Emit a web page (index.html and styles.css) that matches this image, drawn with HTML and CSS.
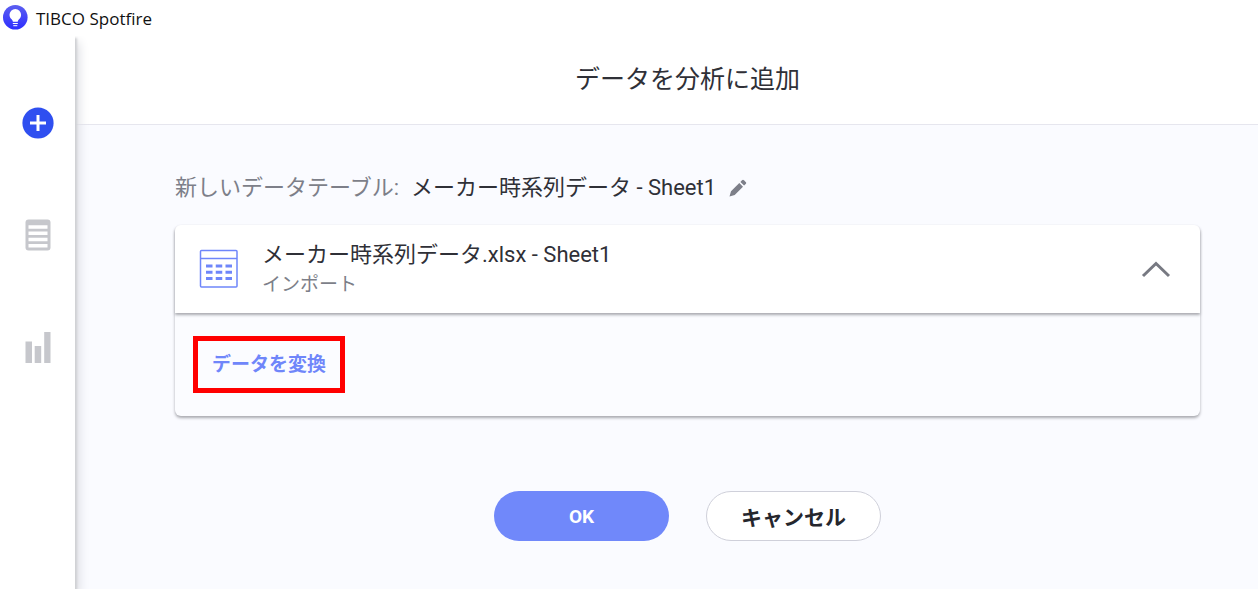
FILE: index.html
```html
<!DOCTYPE html>
<html lang="ja">
<head>
<meta charset="utf-8">
<meta name="viewport" content="width=device-width, initial-scale=1">
<title>TIBCO Spotfire</title>
<link rel="stylesheet" href="styles.css">
</head>
<body>
<header class="titlebar">
  <svg class="logo" width="26" height="26" viewBox="0 0 26 26" aria-hidden="true">
    <defs>
      <linearGradient id="logo-fill" x1="0" y1="0" x2="0" y2="1">
        <stop offset="0" stop-color="#5c5ff0"/>
        <stop offset="1" stop-color="#2d2dff"/>
      </linearGradient>
    </defs>
    <circle cx="13.300" cy="12.300" r="12.300" fill="url(#logo-fill)"/>
    <path d="M13.300 4a5.800 5.800 0 0 0-5.800 5.800c0 2.200 1 3.400 2.100 4.500.8.900 1.200 1.500 1.300 2.400h4.800c.1-.9.500-1.500 1.300-2.400 1.100-1.100 2.100-2.300 2.100-4.500A5.800 5.800 0 0 0 13.300 4z" fill="#fff"/>
    <path d="M10.800 18.500h5M11.300 20.700h4" stroke="#fff" stroke-width="1"/>
  </svg>
  <span>TIBCO Spotfire</span>
</header>
<div class="workspace">
  <nav class="sidebar" aria-label="ツール">
    <button class="tool" type="button" aria-label="追加">
      <svg width="32" height="32" viewBox="0 0 32 32"><circle cx="16" cy="16" r="15.600" fill="#2f4ff0"/><path d="M16 8v16M8 16h16" stroke="#fff" stroke-width="3"/></svg>
    </button>
    <button class="tool" type="button" aria-label="データ">
      <svg width="32" height="32" viewBox="0 0 32 32"><rect x="3.500" y="0.500" width="25" height="31" rx="3" fill="#c6c7cc"/><path d="M6.500 8h19M6.500 14.200h19M6.500 20.400h19M6.500 26.700h19" stroke="#fff" stroke-width="3.500"/></svg>
    </button>
    <button class="tool" type="button" aria-label="ビジュアライゼーション">
      <svg width="32" height="32" viewBox="0 0 32 32"><path d="M3.500 10.500h6.500v21.500H3.500zM12.700 15h6.500v17h-6.500zM22.200 1h6.300v31h-6.300z" fill="#c6c7cc"/></svg>
    </button>
  </nav>
  <main class="main">
    <div class="heading"><h1>データを分析に追加</h1></div>
    <div class="content">
      <div class="table-name">
        <span class="table-label">新しいデータテーブル:</span>
        <span>メーカー時系列データ - Sheet1</span>
        <button class="icon-button edit" type="button" aria-label="名前を編集">
          <svg width="20" height="20" viewBox="0 0 20 20" fill="#7d7f89"><path d="M1.500 18.500l1.500-5.200 8.300-8.300 3.700 3.700-8.300 8.300zM12.400 3.900l1.600-1.600c.7-.7 1.300-.7 2 0l1.700 1.700c.7.7.7 1.300 0 2l-1.600 1.600z"/></svg>
        </button>
      </div>
      <section class="card">
        <div class="source">
          <svg width="40" height="40" viewBox="0 0 40 40" fill="none" stroke="#6f86fa" aria-hidden="true">
            <rect x="1.500" y="1.500" width="36.500" height="36.500" rx="1" stroke-width="1.500"/>
            <path d="M1.500 9.500h36.500" stroke-width="1.500"/>
            <path d="M7 17h26M7 23.300h26M7 29.600h26" stroke-width="3" stroke-dasharray="6.500 3.250"/>
          </svg>
          <div class="source-text">
            <div class="source-name">メーカー時系列データ.xlsx - Sheet1</div>
            <div class="source-kind">インポート</div>
          </div>
          <button class="icon-button" type="button" aria-label="折りたたむ" aria-expanded="true">
            <svg width="30" height="20" viewBox="0 0 30 20" fill="none" stroke="#777982" stroke-width="3"><path d="M2 17L15 4.500 28 17"/></svg>
          </button>
        </div>
        <div class="details">
          <button class="transform" type="button">データを変換</button>
        </div>
      </section>
      <div class="actions">
        <button class="action primary" type="button">OK</button>
        <button class="action secondary" type="button">キャンセル</button>
      </div>
    </div>
  </main>
</div>
</body>
</html>
```
FILE: styles.css
```css
* {
  box-sizing: border-box;
}

body {
  margin: 0;
  min-height: 100vh;
  display: flex;
  flex-direction: column;
  background: #fff;
  color: #2f3037;
  font-family: Roboto, "Noto Sans CJK JP", sans-serif;
}

button {
  padding: 0;
  border: 0;
  background: none;
  font-family: inherit;
  cursor: pointer;
}

svg {
  display: block;
}

.titlebar {
  display: flex;
  align-items: center;
  gap: 8px;
  height: 36px;
  padding-left: 2px;
  color: #111;
  font: 17px "Open Sans", sans-serif;
}

.workspace {
  display: flex;
  flex: 1;
  overflow: hidden;
}

.sidebar {
  position: relative;
  z-index: 1;
  display: flex;
  flex-direction: column;
  align-items: center;
  gap: 80px;
  width: 75px;
  flex-shrink: 0;
  padding-top: 71px;
  background: #fff;
  box-shadow: 2px 2px 2px #cfd0d4, 4px 6px 10px #dcdde2;
}

.main {
  flex: 1;
  min-width: 0;
  background: #fafbff;
}

.heading {
  padding: 26px 58px;
  border-bottom: 1px solid #e6e6ee;
  background: #fff;
  text-align: center;
}

h1 {
  margin: 0;
  font-size: 25px;
  line-height: 36px;
  font-weight: 400;
  padding-left: 42px;
}

.content {
  padding: 47px 58px 40px 100px;
}

.table-name {
  display: flex;
  align-items: center;
  gap: 12px;
  font-size: 22px;
  line-height: 32px;
}

.table-label {
  color: #7d7f89;
}

.card {
  margin-top: 21px;
  border-radius: 6px;
  background: #fbfcff;
  box-shadow: 0 2px 3px #a8a9af;
}

.source {
  display: flex;
  align-items: center;
  gap: 23px;
  padding: 14px 29px 14px 24px;
  border-radius: 6px 6px 0 0;
  background: #fff;
  box-shadow: 0 2px 3px #a8a9af;
}

.source-text {
  flex: 1;
}

.source-name {
  font-size: 22px;
  line-height: 32px;
}

.source-kind {
  color: #7d7f89;
  font-size: 19px;
  line-height: 28px;
}

.details {
  padding: 23px 18px;
}

.transform {
  padding: 0 14px;
  border: 5px solid #f00;
  color: #6f86fa;
  font-size: 19px;
  line-height: 47px;
  font-weight: 700;
}

.actions {
  display: flex;
  justify-content: center;
  gap: 37px;
  margin-top: 75px;
}

.action {
  width: 175px;
  height: 50px;
  border-radius: 25px;
  font-weight: 700;
}

.primary {
  background: #7088fa;
  color: #fff;
  font-size: 19px;
}

.secondary {
  border: 1px solid #cfd0da;
  background: #fff;
  color: #25262d;
  font-size: 21px;
}
```
